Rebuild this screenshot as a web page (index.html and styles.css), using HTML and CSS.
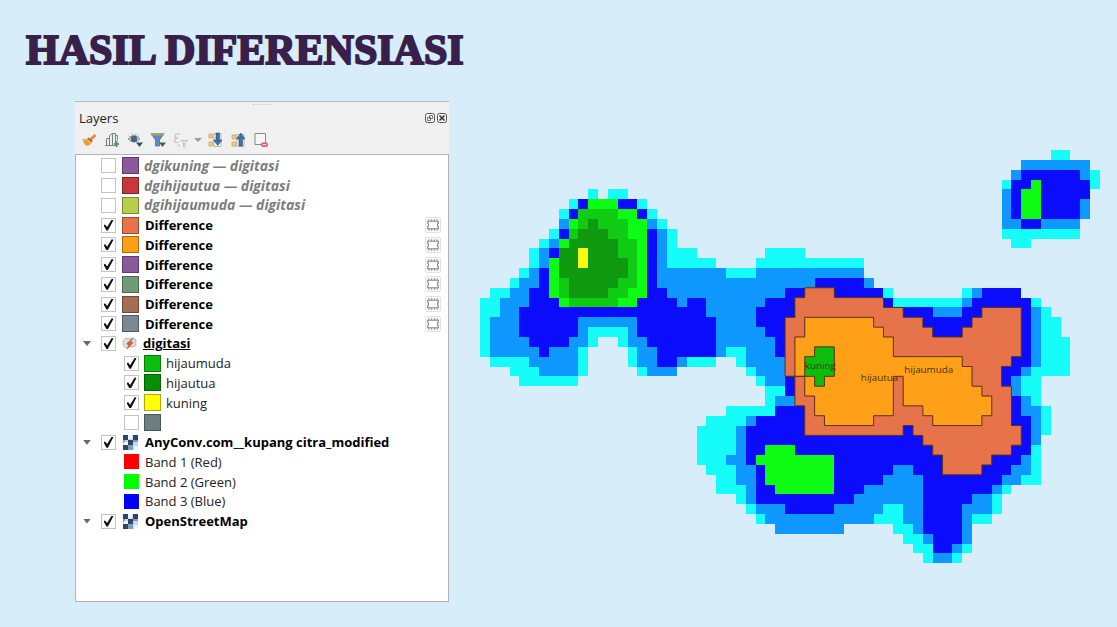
FILE: index.html
```html
<!DOCTYPE html>
<html lang="id">
<head>
<meta charset="utf-8">
<meta name="viewport" content="width=device-width, initial-scale=1">
<title>Hasil Diferensiasi</title>
<link rel="stylesheet" href="styles.css">
</head>
<body>
<svg class="defs" aria-hidden="true">
  <symbol id="memory" viewBox="2 2 12 12">
    <path d="M4.500 3v2M6.800 3v2M9.200 3v2M11.500 3v2M4.500 11v2M6.800 11v2M9.200 11v2M11.500 11v2" stroke="#999" stroke-width="1"/>
    <path d="M3.500 4.800h9v1.700q-1.500 1.500 0 3v1.700h-9V9.500q1.500-1.500 0-3z" fill="#fff" stroke="#888" stroke-width="1"/>
  </symbol>
  <symbol id="raster" viewBox="0 0 15 15">
    <path fill="#c9d8ea" d="M0 0h15v15H0z"/>
    <path fill="#2f4563" d="M0 0h5v5H0zM10 0h5v5h-5zM5 5h5v5H5zM0 10h5v5H0z"/>
    <path fill="#7f9cc4" d="M5 10h5v5H5zM10 5h5v2h-5zM0 5h2v3H0z"/>
    <path fill="#f2f6fa" d="M5 0h4v4H5zM1 7h4v3H1zM11 11h4v4h-4z"/>
  </symbol>
</svg>
<main class="slide">
  <h1 class="title">HASIL DIFERENSIASI</h1>
  <div class="content">
    <section class="panel" aria-label="Layers">
      <div class="grip"></div>
      <header class="panel-head">
        <h2 class="panel-title">Layers</h2>
        <button class="win" type="button" aria-label="Float"><svg viewBox="0 0 10 10"><rect x=".5" y=".5" width="9" height="9" rx="2" fill="#f5f5f5" stroke="#555"/><path d="M4.500 2.500h3v3h-3zM2.500 4.500h3v3h-3z" fill="none" stroke="#555" stroke-width=".8"/></svg></button>
        <button class="win" type="button" aria-label="Close"><svg viewBox="0 0 10 10"><rect x=".5" y=".5" width="9" height="9" rx="2" fill="#f5f5f5" stroke="#555"/><path d="M2.500 2.500l5 5M7.500 2.500l-5 5" stroke="#333" stroke-width="1.500"/></svg></button>
      </header>
      <div class="toolbar">
        <button class="tool" type="button" aria-label="Layer styling"><svg viewBox="0 0 16 16"><path d="M14.500 3L9 8" stroke="#d8903c" stroke-width="3"/><path d="M1.500 6.500q3 1.500 6-.5l4 3.500Q9 14 5.500 14 2.500 13 1.500 6.500z" fill="#efb04e"/><path d="M7 6L11 9.500" stroke="#a8512c" stroke-width="1.500"/><path d="M3 9l3 4M5 8.500l3 4" stroke="#c98326" stroke-width=".8"/></svg></button>
        <button class="tool" type="button" aria-label="Add group"><svg viewBox="0 0 16 16"><path d="M2.500 13.500V6.500h3v7M5.500 13.500v-10l3-2v12M8.500 1.500h3v12M1 13.500h10" fill="#eee" stroke="#77808a"/><path d="M12.500 9v6M10 12h5" stroke="#579a62" stroke-width="2"/><path d="M11.500 3.500h2v5" fill="none" stroke="#579a62"/></svg></button>
        <button class="tool" type="button" aria-label="Manage themes"><svg viewBox="0 0 16 16"><path d="M1 7q6-7 12 0-6 6-12 0z" fill="#c3ced9" stroke="#8b97a4"/><circle cx="7" cy="7" r="3.200" fill="#4a6687"/><path d="M2 3.500l1.500 1.500M5 1.500l.7 2M9 1.500l-.4 2M12 3.500l-1.300 1.300" stroke="#7d8895" stroke-width=".8"/><path d="M9 10.500h7L12.500 15z" fill="#3c4f60"/></svg></button>
        <button class="tool" type="button" aria-label="Filter legend"><svg viewBox="0 0 16 16"><path d="M1 1.500h13L9.500 8v6h-4V8z" fill="#5c8bc2" stroke="#4a73a2" stroke-width=".8"/><path d="M1 1h13v2.500H1z" fill="#a7a65e"/><path d="M9 10.500h7L12.500 15z" fill="#47603d"/></svg></button>
        <button class="tool" type="button" aria-label="Filter by expression" disabled><svg viewBox="0 0 16 16"><path d="M7 2.500Q2 .8 2 4q0 2 3 2-4 0-3.500 3Q2 11.500 6 10" fill="none" stroke="#c4c4c4" stroke-width="1.300"/><path d="M8 8.500h6.500L12 11v4h-1.500v-4zM6 12v3" fill="#e7e7e7" stroke="#c4c4c4"/></svg></button>
        <button class="tool tool-narrow" type="button" aria-label="More"><svg viewBox="0 0 8 8"><path d="M0 2h8L4 6z" fill="#999"/></svg></button>
        <button class="tool" type="button" aria-label="Expand all"><svg viewBox="0 0 16 16"><path d="M2 2h4v4H2zM2 10h4v4H2z" fill="#f1cf82" stroke="#c8a15a" stroke-width=".8"/><path d="M7 1.500h7v13H7z" fill="#f8f8f8" stroke="#a7a7a7" stroke-width=".8"/><path d="M9 1h3.500v7H15l-4.200 5.500L6.500 8H9z" fill="#42719f" stroke="#285274" stroke-width=".6"/></svg></button>
        <button class="tool" type="button" aria-label="Collapse all"><svg viewBox="0 0 16 16"><path d="M2 3h4v4H2zM2 10h4v4H2z" fill="#f1cf82" stroke="#c8a15a" stroke-width=".8"/><path d="M7 2.500h7v12H7z" fill="#f8f8f8" stroke="#a7a7a7" stroke-width=".8"/><path d="M9 14h3.500V7H15l-4.200-6L6.500 7H9z" fill="#42719f" stroke="#285274" stroke-width=".6"/></svg></button>
        <button class="tool" type="button" aria-label="Remove layer"><svg viewBox="0 0 16 16"><path d="M2 1.500h10.500v11H2z" fill="#f6f6f6" stroke="#888"/><rect x="8" y="10.500" width="7" height="4.500" rx="2" fill="#e2546a"/><path d="M9.500 12.800h4" stroke="#fff"/></svg></button>
      </div>
      <div class="tree">
        <ul class="rows">
          <li class="row"><label class="item off"><input class="check" type="checkbox"><i class="swatch purple"></i><span class="name">dgikuning — digitasi</span></label></li>
          <li class="row"><label class="item off"><input class="check" type="checkbox"><i class="swatch red"></i><span class="name">dgihijautua — digitasi</span></label></li>
          <li class="row"><label class="item off"><input class="check" type="checkbox"><i class="swatch lime"></i><span class="name">dgihijaumuda — digitasi</span></label></li>
          <li class="row"><label class="item layer"><input class="check" type="checkbox" checked><i class="swatch coral"></i><span class="name">Difference</span></label><button class="mem" type="button" aria-label="Temporary layer"><svg><use href="#memory"/></svg></button></li>
          <li class="row"><label class="item layer"><input class="check" type="checkbox" checked><i class="swatch orange"></i><span class="name">Difference</span></label><button class="mem" type="button" aria-label="Temporary layer"><svg><use href="#memory"/></svg></button></li>
          <li class="row"><label class="item layer"><input class="check" type="checkbox" checked><i class="swatch purple"></i><span class="name">Difference</span></label><button class="mem" type="button" aria-label="Temporary layer"><svg><use href="#memory"/></svg></button></li>
          <li class="row"><label class="item layer"><input class="check" type="checkbox" checked><i class="swatch sage"></i><span class="name">Difference</span></label><button class="mem" type="button" aria-label="Temporary layer"><svg><use href="#memory"/></svg></button></li>
          <li class="row"><label class="item layer"><input class="check" type="checkbox" checked><i class="swatch brown"></i><span class="name">Difference</span></label><button class="mem" type="button" aria-label="Temporary layer"><svg><use href="#memory"/></svg></button></li>
          <li class="row"><label class="item layer"><input class="check" type="checkbox" checked><i class="swatch slate"></i><span class="name">Difference</span></label><button class="mem" type="button" aria-label="Temporary layer"><svg><use href="#memory"/></svg></button></li>
          <li class="row"><button class="fold" type="button" aria-label="Collapse digitasi"></button><label class="item layer active"><input class="check" type="checkbox" checked><svg class="icon" viewBox="0 0 16 16"><path d="M1 5q2-4 6-2 5-2 8 1-1 3 0 6-4 3-7 1-2 1-4 2-2-2-3-4 1-2 0-4z" fill="#e3e0dc" stroke="#a5a19c" stroke-width=".8"/><path d="M12.500 1L10 6l2.500 1L5 15l1.500-5L4.500 8z" fill="#c46c48"/></svg><span class="name">digitasi</span></label></li>
          <li class="row child"><label class="item"><input class="check" type="checkbox" checked><i class="swatch green"></i><span class="name">hijaumuda</span></label></li>
          <li class="row child"><label class="item"><input class="check" type="checkbox" checked><i class="swatch forest"></i><span class="name">hijautua</span></label></li>
          <li class="row child"><label class="item"><input class="check" type="checkbox" checked><i class="swatch yellow"></i><span class="name">kuning</span></label></li>
          <li class="row child"><label class="item"><input class="check" type="checkbox" aria-label="Other values"><i class="swatch teal"></i></label></li>
          <li class="row"><button class="fold" type="button" aria-label="Collapse AnyConv"></button><label class="item layer raster"><input class="check" type="checkbox" checked><svg class="icon"><use href="#raster"/></svg><span class="name">AnyConv.com__kupang citra_modified</span></label></li>
          <li class="row band"><i class="swatch b1"></i><span class="name">Band 1 (Red)</span></li>
          <li class="row band"><i class="swatch b2"></i><span class="name">Band 2 (Green)</span></li>
          <li class="row band"><i class="swatch b3"></i><span class="name">Band 3 (Blue)</span></li>
          <li class="row"><button class="fold" type="button" aria-label="Collapse OpenStreetMap"></button><label class="item layer raster"><input class="check" type="checkbox" checked><svg class="icon"><use href="#raster"/></svg><span class="name">OpenStreetMap</span></label></li>
        </ul>
      </div>
    </section>
    <svg class="map" viewBox="0 0 630 420" role="img" aria-label="Peta hasil diferensiasi">
      <g id="cells" shape-rendering="crispEdges"></g>
      <g class="zones" transform="scale(10)">
        <path fill="#e7734b" d="M33 14H36V15H41V16H43V17H45V18H46V19H49V18H50V17H51V16H55V21H54V22H53V24H54V28H55V30H54V31H52V32H51V33H47V31H46V30H45V29H44V28H43V29H33V26H32V23H31V17H32V15H33Z"/>
        <path fill="#ffa018" d="M33 17H40V18H41V19H42V21H49V22H50V24H51V25H52V27H51V28H46V27H45V26H43V23H42V27H40V28H35V27H34V25H33V23H32V19H33Z"/>
        <path fill="#0cbd0c" d="M34 20H36V23H35V24H34V23H33V21H34Z"/>
        <path fill="none" d="M31 23H33"/>
      </g>
      <text class="label" x="330" y="223">kuning</text>
      <text class="label" x="387" y="235">hijautua</text>
      <text class="label" x="431" y="227">hijaumuda</text>
    </svg>
  </div>
</main>
<script src="map.js"></script>
</body>
</html>
```
FILE: styles.css
```css
* { box-sizing: border-box; }

body {
  margin: 0;
  background: #d7edf9;
  font-family: "Open Sans", "Noto Sans", sans-serif;
  font-size: 13px;
  line-height: 18px;
  color: #222;
}

.defs { display: none; }

.slide {
  min-height: 100vh;
  padding: 24px 17px 24px 26px;
}

.title {
  margin: 0;
  font-family: "Liberation Serif", "Times New Roman", serif;
  font-size: 42px;
  line-height: 52px;
  font-weight: 700;
  color: #38204a;
  -webkit-text-stroke: 2px #38204a;
}

.content {
  display: grid;
  grid-template-columns: 374px minmax(0, 1fr);
  column-gap: 31px;
  align-items: start;
  padding: 25px 0 0 49px;
}

.panel {
  display: flex;
  flex-direction: column;
  background: #f0f0f0;
  border-top: 1px solid #b4bcc0;
}

.grip {
  align-self: center;
  width: 18px;
  height: 3px;
  border-bottom: 1px dotted #ccc;
}

.panel-head {
  display: flex;
  align-items: center;
  gap: 2px;
  padding: 4px 2px 0 4px;
}

.panel-title {
  flex: 1;
  margin: 0;
  font-size: 13px;
  font-weight: 400;
}

button {
  padding: 0;
  border: 0;
  background: none;
}

.win { width: 10px; height: 10px; }
.win svg, .tool svg, .mem svg { display: block; width: 100%; height: 100%; }

.toolbar {
  display: flex;
  align-items: center;
  gap: 1px;
  padding: 5px 3px 6px;
}

.tool { width: 22px; height: 16px; }
.tool-narrow { width: 10px; height: 8px; }

.tree {
  min-height: 448px;
  padding-top: 1px;
  background: #fff;
  border: 1px solid #b0b4b8;
}

.rows {
  display: flex;
  flex-direction: column;
  height: 375px;
  margin: 0;
  padding: 0;
  list-style: none;
}

.row {
  flex: 1;
  min-height: 0;
  display: flex;
  align-items: center;
  padding: 0 7px 0 25px;
}

.item {
  flex: 1;
  display: flex;
  align-items: center;
  gap: 6px;
}

.child { padding-left: 48px; }
.child .item { gap: 5px; }
.band { padding-left: 48px; gap: 6px; }

.check {
  appearance: none;
  display: grid;
  place-items: center;
  width: 15px;
  height: 15px;
  margin: 0;
  background: #fff;
  border: 1px solid #c4c4c4;
}

.check:checked::before {
  content: "";
  width: 10px;
  height: 11px;
  background: #111;
  clip-path: polygon(0 52%, 16% 44%, 36% 68%, 82% 0, 100% 4%, 44% 100%, 30% 100%);
}

.swatch {
  width: 17px;
  height: 17px;
  border: 1px solid #0005;
}

.icon { width: 15px; height: 15px; }
.raster .icon { margin: 0 1px; }

.off { font-size: 14px; font-weight: 700; font-style: italic; color: #7d7d7d; gap: 5px; }
.off .check { margin-right: 1px; }
.layer { font-weight: 700; color: #000; }
.active .name { text-decoration: underline; }

.fold {
  width: 8px;
  height: 5px;
  margin: 0 10px 0 -18px;
  background: #666;
  clip-path: polygon(0 0, 100% 0, 50% 100%);
}

.mem {
  width: 16px;
  height: 16px;
  border: 1px solid #e2e2e2;
  border-radius: 2px;
  background: #fafafa;
}

.purple { background: #8b5a9c; }
.red { background: #c8383b; }
.lime { background: #b9cf4b; }
.coral { background: #e7734b; }
.orange { background: #ff9e17; }
.sage { background: #719b74; }
.brown { background: #a66d55; }
.slate { background: #7b8a90; }
.green { background: #0cbd0c; }
.forest { background: #059005; }
.yellow { background: #ff0; }
.teal { background: #6a8080; }

.band .swatch { width: 15px; height: 15px; border: 0; }
.b1 { background: #f00; }
.b2 { background: #0f0; }
.b3 { background: #00f; }

.map {
  display: block;
  width: 100%;
  margin-top: 49px;
}

.zones path {
  stroke: #5c3210;
  stroke-width: 1px;
  vector-effect: non-scaling-stroke;
}

.label {
  font-size: 10px;
  fill: #4a3208;
}
```
FILE: map.js
```js
// Each line is one raster row; a token is a colour code and a column or column range.
const rows = `c58-59
a55-61
a54 b55-60 a61 c62
c53 b54-55 g56 b57-61 c62
c11 c13-14 a53 b54 g55-56 b57-61
c9 b10 g11-13 b14-15 c16 a53 b54 g55-56 b57-60 a61
c8 b9 m10-13 g14-15 b16 c17 a53 b54 g55-56 b57-60 a61
a8 g9 m10 d11 m12-14 g15-16 a17 c18 a53-54 b55-56 a57-60
c7 b8 m9 d10-12 m13-14 g15-16 b17 a18 c19 c53-60
c6 a7 g8 d9-13 m14-15 g16 b17 a18 c19 c54-55
c5 a6 b7 d8-9 y10 d11-13 m14-15 g16 b17 a18 c19-21 c29-32
c5 a6 g7 d8-9 y10 d11-14 m15 g16 b17 a18 c19-23 c28-38
c4 a5 b6 g7 d8-14 m15 g16 b17 a18-24 c25-27 a28-38
c3 a4-5 b6 g7 m8 d9-13 m14-15 g16 b17 a18-33 b34-38 a39
c1-2 a3-4 b5-6 g7 m8 d9-12 m13-14 g15-16 b17-18 a19-30 b31-40 c41 c49 a50 b51-54
c0-1 a2-4 b5-7 g8 m9-13 g14-15 b16-19 a20 b21-22 a23-28 b29-41 c42-48 a49 b50-55 c56
c0-1 a2-3 b4-22 a23-27 b28-45 a46-48 b49-55 a56 c57
c0 a1-3 b4-9 a10-15 b16-23 a24-27 b28-55 a56 c57-58
c0 a1-3 b4-9 a10 c11-14 a15 b16-23 a24-28 b29-55 a56 c57-58
c0 a1-4 b5-8 a9-10 c11 c14 a15-16 b17-23 a24-29 b30-55 a56 c57-59
c0 a1-5 b6 a7-9 c10 c15 a16-17 b18-23 a24 c25-26 a27-29 b30-55 a56 c57-59
c1-4 a5-9 c10 c15 a16-17 b18-19 a20 c21-23 c26 a27-30 b31-55 a56 c57-59
c3-5 a6-9 c10 c16 a17-19 c27 a28-30 b31-54 a55 c56-59
c4-9 c28 a29-30 b31-53 a54 c55-56
c29-30 b31-53 a54 c55-56
c29 a30-31 b32-54 a55 c56
c25-29 b30-54 a55-56 c57
c23-26 a27 b28-55 a56 c57
c22-25 a26 b27-55 a56 c57
c22-25 a26 b27-55 a56
c22-25 a26 b27-28 g29-31 b32-55 c56
c22-24 a25-26 b27 g28-35 b36-54 a55 c56
c23-25 a26-27 b28 g29-35 b36-41 a42-43 b44-53 a54-55 c56
c24-25 a26-27 b28 g29-35 b36-40 a41-44 b45-52 a53-54 c55-56
c24-26 a27 b28-29 g30-35 b36-38 a39-44 b45-51 a52 c53
c26 a27 b28-37 a38-44 b45-49 a50-51 c52
c27 a28-30 b31-35 a36-40 c41-42 a43-44 b45-48 a49-51 c52
c28 a29-39 c40-42 a43-44 b45-48 a49 c50-51
a30-36 c42-43 a44 b45-48 a49
c43-44 a45 b46-48 a49
c44-45 b46-47 a48 c49
c45 a46-47 c48`.split("\n");

const colours = {
  c: "#16fcf8", a: "#0f98ff", b: "#0c0cfc", g: "#0cfc14",
  m: "#10cc14", d: "#0f9a10", y: "#fcfc10"
};
const paths = {};

rows.forEach((line, row) => {
  for (const token of line.split(" ")) {
    const [from, to = from] = token.slice(1).split("-").map(Number);
    paths[token[0]] = (paths[token[0]] || "") +
      `M${from * 10} ${row * 10}h${(to - from + 1) * 10}v10h-${(to - from + 1) * 10}z`;
  }
});

const cells = document.getElementById("cells");
for (const code in paths) {
  const path = document.createElementNS("http://www.w3.org/2000/svg", "path");
  path.setAttribute("fill", colours[code]);
  path.setAttribute("d", paths[code]);
  cells.append(path);
}
```
